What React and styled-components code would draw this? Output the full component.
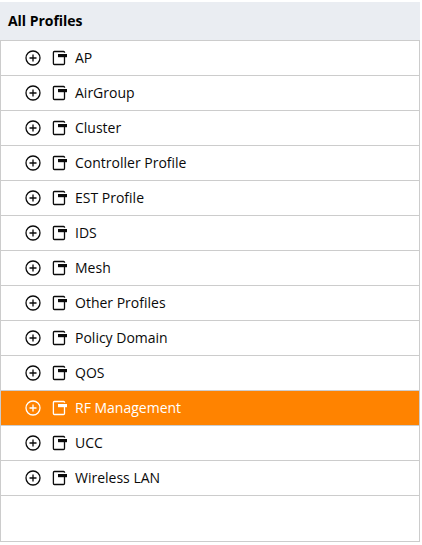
import React from 'react';
import styled, { createGlobalStyle } from 'styled-components';

const profiles = [
  'AP',
  'AirGroup',
  'Cluster',
  'Controller Profile',
  'EST Profile',
  'IDS',
  'Mesh',
  'Other Profiles',
  'Policy Domain',
  'QOS',
  'RF Management',
  'UCC',
  'Wireless LAN',
];

const App = () => {
  return (
    <>
      <GlobalStyle />
      <Panel>
        <Header>All Profiles</Header>
        <List>
          {profiles.map((name) => (
            <Row key={name} $active={name === 'RF Management'}>
              <Toggle viewBox="0 0 16 16">
                <circle cx="8" cy="8" r="7" />
                <path d="M4.5 8h7M8 4.5v7" />
              </Toggle>
              <ProfileIcon viewBox="0 0 16 16">
                <path d="M13.6 2.8Q13.6 1.5 12.6 1.5H3.4Q2.4 1.5 2.4 2.5V13.5Q2.4 14.5 3.4 14.5H12.5Q13.5 14.5 13.5 13.5V7" />
                <rect x="7" y="4" width="9" height="3.2" />
              </ProfileIcon>
              <Label>{name}</Label>
            </Row>
          ))}
        </List>
      </Panel>
    </>
  );
};

const GlobalStyle = createGlobalStyle`
  * {
    box-sizing: border-box;
  }
  body {
    margin: 0;
    background: #fff;
    font-family: "Open Sans", sans-serif;
  }
`;

const Panel = styled.div`
  width: 420px;
  height: 542px;
  padding-top: 2px;
  display: flex;
  flex-direction: column;
`;

const Header = styled.div`
  height: 38px;
  padding-left: 8px;
  background: #eaedf2;
  color: #000;
  font-size: 14px;
  font-weight: 700;
  line-height: 37px;
  letter-spacing: -0.04px;
`;

const List = styled.ul`
  flex: 1;
  margin: 0;
  padding: 0;
  list-style: none;
  border: 1px solid #ccc;
`;

const Row = styled.li`
  display: flex;
  align-items: center;
  height: 35px;
  padding-left: 24px;
  border-bottom: 1px solid #ccc;
  background: ${(props) => (props.$active ? '#ff8300' : '#fff')};
  color: ${(props) => (props.$active ? '#fff' : '#0a0a0a')};
`;

const Toggle = styled.svg`
  width: 16px;
  height: 16px;
  margin-right: 10px;
  fill: none;
  stroke: currentColor;
  stroke-width: 1.3;
`;

const ProfileIcon = styled.svg`
  width: 16px;
  height: 16px;
  margin-right: 8px;
  path {
    fill: none;
    stroke: currentColor;
    stroke-width: 1.3;
  }
  rect {
    fill: currentColor;
  }
`;

const Label = styled.span`
  font-size: 14px;
  line-height: 20px;
`;

export default App;
